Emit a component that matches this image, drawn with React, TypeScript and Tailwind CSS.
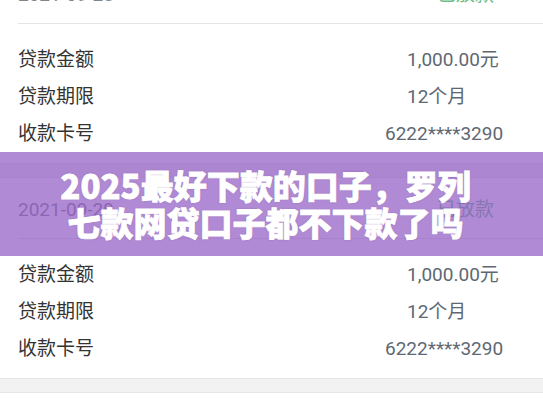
const records = [
  { date: "2021-09-28", status: "已放款" },
  { date: "2021-09-29", status: "已放款" },
];

const font = { fontFamily: '"Roboto", "Noto Sans CJK SC", sans-serif' };

function RecordCard({ date, status }: { date: string; status: string }) {
  return (
    <div className="bg-white">
      <div className="ml-[18px] h-[61px] pt-[5px] flex items-center justify-between border-b border-[#e4e4e4]">
        <span className="text-[19px] text-[#80858b]">{date}</span>
        <span className="text-[19px] text-[#6bbd85] w-[106px]">{status}</span>
      </div>
      <div className="pt-[18px] pb-[10px] pl-[18px]">
        <div className="h-[37px] flex items-center">
          <span className="flex-1 text-[19px] text-[#333]">贷款金额</span>
          <span className="w-[136px] text-[19px] text-[#5e6873]">1,000.00元</span>
        </div>
        <div className="h-[37px] flex items-center">
          <span className="flex-1 text-[19px] text-[#333]">贷款期限</span>
          <span className="w-[136px] text-[19px] text-[#5e6873]">12个月</span>
        </div>
        <div className="h-[37px] flex items-center">
          <span className="flex-1 text-[19px] text-[#333]">收款卡号</span>
          <span className="w-[136px] text-[19px] text-[#5e6873] -ml-[22px] pr-[22px] box-content">6222****3290</span>
        </div>
      </div>
    </div>
  );
}

export default function App() {
  return (
    <div className="relative w-[543px] h-[408px] overflow-hidden bg-white" style={font}>
      <div className="-mt-[37px]">
        <RecordCard {...records[0]} />
        <div className="h-[15px] bg-[#f2f2f2] border-y border-[#e6e6e6]" />
        <RecordCard {...records[1]} />
        <div className="h-[15px] bg-[#f2f2f2] border-y border-[#e6e6e6]" />
      </div>

      {/* title banner over the list */}
      <div className="absolute left-0 right-0 top-[152px] h-[104px] bg-[rgba(144,89,195,0.7)] flex flex-col items-center justify-center pr-[12px]">
        <p
          className="text-[33px] leading-[37px] font-black text-white text-center"
          style={{
            fontFamily: '"Noto Sans CJK SC", sans-serif',
            WebkitTextStroke: "0.8px white",
            textShadow: "0 0 2px rgba(60,40,80,0.35)",
          }}
        >
          2025最好下款的口子，罗列
          <br />
          七款网贷口子都不下款了吗
        </p>
      </div>
    </div>
  );
}
